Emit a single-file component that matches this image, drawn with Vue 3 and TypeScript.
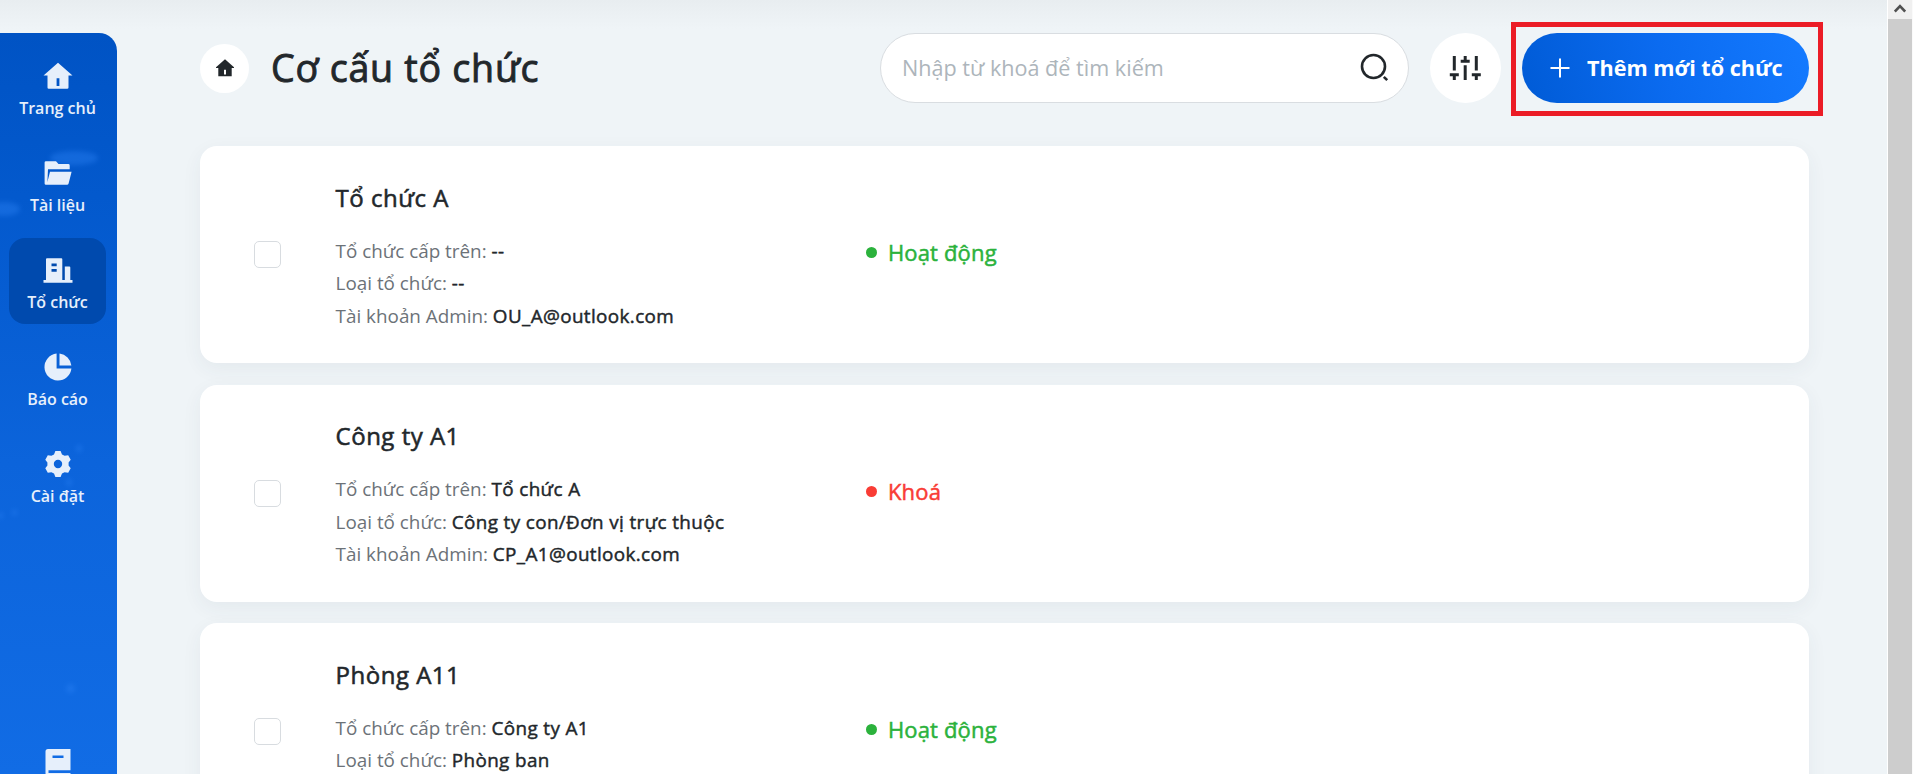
<template>
  <div class="page">
    <aside class="sidebar">
      <span v-for="(g, i) in glows" :key="i" class="glow" :style="g"></span>
      <nav class="menu">
        <a v-for="item in menu" :key="item.label" class="menu__item" :class="{ 'menu__item--active': item.active }">
          <svg class="menu__icon" viewBox="0 0 30 30" fill="currentColor" fill-rule="evenodd">
            <path :d="item.icon" />
          </svg>
          <span class="menu__label">{{ item.label }}</span>
        </a>
      </nav>
      <svg class="sidebar__book" viewBox="0 0 26 30" fill="currentColor" fill-rule="evenodd">
        <path d="M3 0H25.5V21.3H3.5V24H25.5V27H3Q.5 27 .5 24V2.5Q.5 0 3 0ZM7.5 6.5V9H18.5V6.5Z" />
      </svg>
    </aside>

    <main class="content">
      <header class="header">
        <button type="button" class="home">
          <svg width="18" height="18" viewBox="0 0 18 18" fill="currentColor" fill-rule="evenodd">
            <path d="M9 .2 18 8.3V9H15.7V17.2H2.3V9H0V8.3ZM8 10.8V15.5H10V10.8Z" />
          </svg>
        </button>
        <h1 class="header__title">Cơ cấu tổ chức</h1>

        <label class="search">
          <input v-model="keyword" class="search__input" type="text" placeholder="Nhập từ khoá để tìm kiếm" />
          <svg width="30" height="30" viewBox="0 0 30 30" fill="none" stroke="currentColor" stroke-width="2.6">
            <circle cx="13.5" cy="13.5" r="11.5" />
            <path d="M23.8 23.8 27.2 27.2" />
          </svg>
        </label>

        <button type="button" class="filter">
          <svg width="32" height="26" viewBox="0 0 32 26" fill="none" stroke="currentColor" stroke-width="3">
            <path d="M5.3 1V15.5M.8 19.7H9.8M5.3 19.7V25M16.2 1V6.2M11.7 6.2H20.7M16.2 10.2V25M27.3 1V15.5M22.8 19.7H31.8M27.3 19.7V25" />
          </svg>
        </button>

        <button type="button" class="add">
          <svg width="20" height="20" viewBox="0 0 20 20" fill="none" stroke="currentColor" stroke-width="2">
            <path d="M10 .5V19.5M.5 10H19.5" />
          </svg>
          <span class="add__text">Thêm mới tổ chức</span>
          <span class="add__marker"></span>
        </button>
      </header>

      <section class="list">
        <article v-for="org in organizations" :key="org.name" class="card">
          <input type="checkbox" class="card__check" />
          <div class="card__info">
            <h2 class="card__title">{{ org.name }}</h2>
            <p class="card__row">Tổ chức cấp trên: <span class="card__value">{{ org.parent }}</span></p>
            <p class="card__row">Loại tổ chức: <span class="card__value">{{ org.type }}</span></p>
            <p v-if="org.admin" class="card__row">Tài khoản Admin: <span class="card__value">{{ org.admin }}</span></p>
          </div>
          <div class="status" :class="org.active ? 'status--active' : 'status--locked'">
            <span class="status__dot"></span>
            <span class="status__text">{{ org.active ? 'Hoạt động' : 'Khoá' }}</span>
          </div>
        </article>
      </section>
    </main>

    <div class="scrollbar">
      <div class="scrollbar__up">
        <svg width="12" height="9" viewBox="0 0 12 9" fill="none" stroke="#505050" stroke-width="2.6">
          <path d="M.8 7.6 6 2.2 11.2 7.6" />
        </svg>
      </div>
      <div class="scrollbar__thumb"></div>
    </div>
  </div>
</template>

<script setup lang="ts">
import { ref } from 'vue';

interface Organization {
  name: string;
  parent: string;
  type: string;
  admin?: string;
  active: boolean;
}

interface MenuItem {
  label: string;
  icon: string;
  active?: boolean;
}

const keyword = ref('');

const menu: MenuItem[] = [
  {
    label: 'Trang chủ',
    icon: 'M15 1.8 29.5 14.5H25.5V26.5Q25.5 27.8 24.2 27.8H5.8Q4.5 27.8 4.5 26.5V14.5H.5ZM13.6 17.2V25H16.4V17.2Z'
  },
  {
    label: 'Tài liệu',
    icon: 'M3 3.2H13L15.5 6H25.3Q26.7 6 26.7 7.4V11.2H5L4.4 24 7 13.7H28.6L25.6 25.5Q25.3 26.8 24 26.8H3Q1.6 26.8 1.6 25.4V4.6Q1.6 3.2 3 3.2Z'
  },
  {
    label: 'Tổ chức',
    active: true,
    icon: 'M4 3.3H18.3Q19.3 3.3 19.3 4.3V25H21.8V11.5H26.3Q27.3 11.5 27.3 12.5V25H29.5V27.8H.5V25H3V4.3Q3 3.3 4 3.3ZM8.5 8.5V11.2H13.7V8.5ZM8.5 14V16.7H13.7V14Z'
  },
  {
    label: 'Báo cáo',
    icon: 'M13.6 1.6V16.4H28.4A13.5 13.5 0 1 1 13.6 1.6ZM16.5 1.6A13.5 13.5 0 0 1 28.4 13.6H16.5Z'
  },
  {
    label: 'Cài đặt',
    icon: 'M12.4 2H17.6L19 5.4 21.6 6.8 25.2 6.3 27.7 10.8 25.6 13.6V16.4L27.7 19.2 25.2 23.7 21.6 23.2 19 24.6 17.6 28H12.4L11 24.6 8.4 23.2 4.8 23.7 2.3 19.2 4.4 16.4V13.6L2.3 10.8 4.8 6.3 8.4 6.8 11 5.4ZM15 10.8A4.2 4.2 0 1 0 15 19.2 4.2 4.2 0 0 0 15 10.8Z'
  }
];

// soft light spots of the sidebar texture
const glows = [
  { left: '50px', top: '118px', width: '48px', height: '14px' },
  { left: '-12px', top: '169px', width: '32px', height: '14px' },
  { left: '76px', top: '412px', width: '6px', height: '7px' },
  { left: '66px', top: '446px', width: '6px', height: '7px' },
  { left: '12px', top: '476px', width: '5px', height: '7px' },
  { left: '-2px', top: '479px', width: '5px', height: '7px' },
  { left: '66px', top: '651px', width: '9px', height: '9px' }
];

const organizations: Organization[] = [
  { name: 'Tổ chức A', parent: '--', type: '--', admin: 'OU_A@outlook.com', active: true },
  { name: 'Công ty A1', parent: 'Tổ chức A', type: 'Công ty con/Đơn vị trực thuộc', admin: 'CP_A1@outlook.com', active: false },
  { name: 'Phòng A11', parent: 'Công ty A1', type: 'Phòng ban', active: true }
];
</script>

<style>
body {
  overflow: hidden;
}
</style>

<style scoped>
.page {
  display: flex;
  width: 100%;
  height: 100vh;
  overflow: hidden;
  background: linear-gradient(#e8edf0 0, #ebf0f3 12px, #eff4f7 29px);
  font-family: 'Open Sans', 'Noto Sans', sans-serif;
  color: #22272b;
}

.page * {
  box-sizing: border-box;
}

.sidebar {
  position: relative;
  flex: none;
  width: 117px;
  margin-top: 33px;
  padding: 11px 11px 0 9px;
  overflow: hidden;
  display: flex;
  flex-direction: column;
  justify-content: space-between;
  border-top-right-radius: 18px;
  background: linear-gradient(#0053c4, #0359cd 22%, #0c64db 58%, #116ce5);
  color: #e6effb;
}

.glow {
  position: absolute;
  border-radius: 50%;
  background: #2d83f5;
  opacity: 0.4;
  filter: blur(2.5px);
}

.menu {
  position: relative;
  display: flex;
  flex-direction: column;
  gap: 11px;
}

.menu__item {
  display: flex;
  flex-direction: column;
  align-items: center;
  height: 86px;
  padding-top: 17px;
  border-radius: 16px;
}

.menu__item--active {
  background: #004aae;
}

.menu__icon {
  width: 30px;
  height: 30px;
}

.menu__label {
  margin-top: 5px;
  font-size: 16px;
  line-height: 24px;
  font-weight: 600;
  white-space: nowrap;
}

.sidebar__book {
  flex: none;
  align-self: center;
  width: 26px;
  height: 30px;
  margin-bottom: -5px;
}

.content {
  flex: 1;
  min-width: 0;
  padding: 33px 78px 0 83px;
}

.header {
  display: flex;
  align-items: center;
  height: 70px;
  margin-bottom: 43px;
}

.home,
.filter {
  flex: none;
  display: flex;
  align-items: center;
  justify-content: center;
  padding: 0;
  border: 0;
  border-radius: 50%;
  background: #fff;
  color: #22272b;
}

.home {
  width: 49px;
  height: 49px;
}

.header__title {
  margin: 0 auto 0 22px;
  font-size: 37.6px;
  line-height: 50px;
  font-weight: 400;
  letter-spacing: 0.75px;
  -webkit-text-stroke: 0.9px currentColor;
  white-space: nowrap;
}

.search {
  flex: none;
  display: flex;
  align-items: center;
  justify-content: space-between;
  width: 529px;
  height: 70px;
  padding: 0 18px 0 21px;
  border: 1px solid #d9dde1;
  border-radius: 35px;
  background: #fff;
}

.search__input {
  width: 400px;
  padding: 0 0 2px;
  border: 0;
  outline: 0;
  background: transparent;
  font: 400 21.6px 'Open Sans', 'Noto Sans', sans-serif;
  color: #22272b;
}

.search__input::placeholder {
  color: #adb5bb;
}

.filter {
  width: 71px;
  height: 70px;
  margin: 0 21px;
  padding-right: 1px;
}

.add {
  position: relative;
  flex: none;
  display: flex;
  align-items: center;
  gap: 17px;
  width: 287px;
  height: 70px;
  padding: 0 0 0 28px;
  border: 0;
  border-radius: 35px;
  background: linear-gradient(75deg, #005bd6, #0b6bf0 50%, #147aff);
  color: #fff;
}

.add__text {
  padding-bottom: 2px;
  font: 700 21.6px 'Open Sans', 'Noto Sans', sans-serif;
  white-space: nowrap;
}

.add__marker {
  position: absolute;
  inset: -11px -14px -13px -11px;
  border: 5px solid #eb1c26;
}

.list {
  display: flex;
  flex-direction: column;
  gap: 21.5px;
}

.card {
  display: flex;
  height: 217px;
  padding: 35.5px 54px 0;
  border-radius: 17px;
  background: #fff;
  box-shadow: 0 6px 20px rgba(50, 70, 80, 0.06);
}

.card__check {
  appearance: none;
  flex: none;
  width: 27px;
  height: 27px;
  margin: 59.5px 54.6px 0 0;
  border: 1px solid #d8dce0;
  border-radius: 5px;
  background: #fff;
}

.card__info {
  flex: none;
  width: 530.4px;
}

.card__title {
  margin: 0 0 21px;
  font-size: 24px;
  line-height: 32px;
  font-weight: 400;
  letter-spacing: 0.5px;
  -webkit-text-stroke: 0.55px currentColor;
}

.card__row {
  margin: 0;
  font-size: 18.85px;
  line-height: 32.5px;
  color: #6c7278;
  white-space: nowrap;
}

.card__value {
  letter-spacing: 0.38px;
  -webkit-text-stroke: 0.45px currentColor;
  color: #22272b;
}

.status {
  display: flex;
  align-items: center;
  gap: 11px;
  height: 32px;
  margin-top: 55px;
}

.status__dot {
  width: 11px;
  height: 11px;
  border-radius: 50%;
  background: currentColor;
}

.status__text {
  padding-bottom: 1px;
  font-size: 22px;
  letter-spacing: 0.15px;
  -webkit-text-stroke: 0.5px currentColor;
}

.status--active {
  color: #2bb23c;
}

.status--locked {
  color: #f93c35;
}

.scrollbar {
  flex: none;
  display: flex;
  flex-direction: column;
  width: 26px;
  border-left: 1px solid #fff;
  border-right: 1px solid #fafafa;
  background: #f0f0f0;
}

.scrollbar__up {
  display: flex;
  align-items: center;
  justify-content: center;
  height: 19px;
  padding-bottom: 3px;
}

.scrollbar__thumb {
  flex: 1;
  background: #cdcdcd;
}
</style>
